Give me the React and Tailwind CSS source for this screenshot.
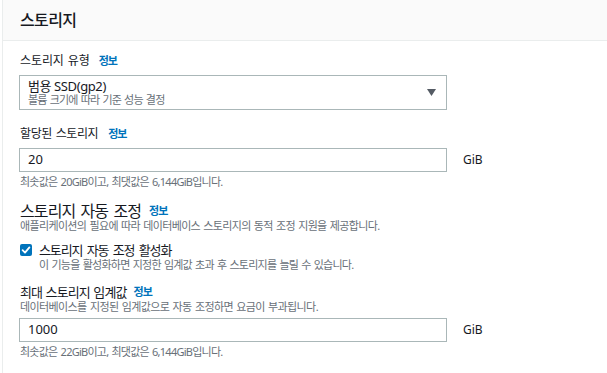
import { useState } from "react";

const Info = ({ className = "" }) => (
  <span className={`text-[11px] font-bold tracking-[-1px] text-[#0073bb] ${className}`}>정보</span>
);

const Caret = () => (
  <svg width="9" height="7" viewBox="0 0 9 7" className="block">
    <path d="M0 0 H9 L4.5 7 Z" fill="#545b64" />
  </svg>
);

const Check = () => (
  <svg width="12" height="12" viewBox="0 0 12 12" className="block">
    <rect x="0" y="0" width="12" height="12" rx="2" fill="#0073bb" />
    <path d="M2.6 6.2 L5 8.6 L9.4 3.4" stroke="#fff" strokeWidth="1.8" fill="none" strokeLinecap="round" strokeLinejoin="round" />
  </svg>
);

export default function App() {
  const [autoscale] = useState(true);

  return (
    <div
      className="w-[607px] h-[373px] overflow-hidden bg-white pl-[2px] text-[#16191f]"
      style={{ fontFamily: '"Noto Sans", "Noto Sans CJK KR", sans-serif' }}
    >
      <div className="h-full border-l border-[#eaeded]">
        {/* header */}
        <div className="h-[41px] bg-[#fafafa] border-b border-[#eaeded] pl-[17px] flex items-center">
          <h2 className="text-[16px] font-medium tracking-[-0.6px] leading-none">스토리지</h2>
        </div>

        <div className="pl-[16px] pt-[12px]">
          {/* 스토리지 유형 */}
          <div className="h-[16px] flex items-center gap-[9px] pl-[1px]">
            <span className="text-[12px] tracking-[-0.1px] [word-spacing:1px] leading-[16px]">스토리지 유형</span>
            <Info />
          </div>
          <div className="mt-[6px] w-[428px] h-[35px] border border-[#aab7b8] flex items-center justify-between pl-[8px] pr-[10px]">
            <div className="flex flex-col">
              <span className="text-[13px] leading-[14px] tracking-[-0.4px]">범용 SSD(gp2)</span>
              <span className="text-[11px] leading-[13px] tracking-[-0.8px] [word-spacing:1px] text-[#687078]">볼륨 크기에 따라 기준 성능 결정</span>
            </div>
            <Caret />
          </div>

          {/* 할당된 스토리지 */}
          <div className="mt-[16px] h-[16px] flex items-center gap-[10px] pl-[1px]">
            <span className="text-[12px] tracking-[-0.4px] [word-spacing:1px] leading-[16px]">할당된 스토리지</span>
            <Info />
          </div>
          <div className="mt-[6px] flex items-center gap-[16px]">
            <div className="w-[428px] h-[24px] border border-[#aab7b8] flex items-center pl-[8px] text-[13px]">20</div>
            <span className="text-[12px] text-[#16191f]">GiB</span>
          </div>
          <div className="mt-[2px] pl-[1px] text-[11px] leading-[15px] tracking-[-0.75px] [word-spacing:1px] text-[#687078]">
            최솟값은 20GiB이고, 최댓값은 6,144GiB입니다.
          </div>

          {/* 스토리지 자동 조정 */}
          <div className="mt-[14px] h-[16px] flex items-center gap-[8px] pl-[1px]">
            <span className="text-[16px] tracking-[-0.9px] [word-spacing:2px] leading-[16px]">스토리지 자동 조정</span>
            <Info />
          </div>
          <div className="pl-[1px] text-[11px] leading-[14px] tracking-[-0.65px] [word-spacing:1px] text-[#687078]">
            애플리케이션의 필요에 따라 데이터베이스 스토리지의 동적 조정 지원을 제공합니다.
          </div>

          <div className="mt-[10px] flex items-start gap-[7px] pl-[1px]">
            <div className="mt-[1px]">{autoscale && <Check />}</div>
            <div className="flex flex-col">
              <span className="text-[13px] leading-[15px] tracking-[-1.1px] [word-spacing:2px]">스토리지 자동 조정 활성화</span>
              <span className="text-[11px] leading-[14px] tracking-[-0.75px] [word-spacing:1px] text-[#687078]">
                이 기능을 활성화하면 지정한 임계값 초과 후 스토리지를 늘릴 수 있습니다.
              </span>
            </div>
          </div>

          {/* 최대 스토리지 임계값 */}
          <div className="mt-[12px] h-[16px] flex items-center gap-[7px] pl-[1px]">
            <span className="text-[13px] tracking-[-0.9px] [word-spacing:1px] leading-[16px]">최대 스토리지 임계값</span>
            <Info />
          </div>
          <div className="pl-[1px] text-[11px] leading-[14px] tracking-[-0.6px] [word-spacing:1px] text-[#687078]">
            데이터베이스를 지정된 임계값으로 자동 조정하면 요금이 부과됩니다.
          </div>
          <div className="mt-[4px] flex items-center gap-[16px]">
            <div className="w-[428px] h-[24px] border border-[#aab7b8] flex items-center pl-[8px] text-[13px]">1000</div>
            <span className="text-[12px] text-[#16191f]">GiB</span>
          </div>
          <div className="mt-[2px] pl-[1px] text-[11px] leading-[15px] tracking-[-0.75px] [word-spacing:1px] text-[#687078]">
            최솟값은 22GiB이고, 최댓값은 6,144GiB입니다.
          </div>
        </div>
      </div>
    </div>
  );
}
